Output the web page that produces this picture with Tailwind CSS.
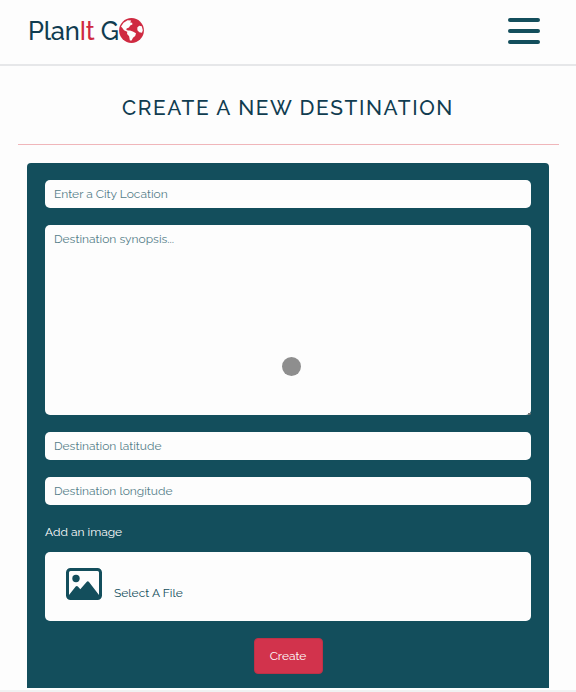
<!DOCTYPE html>
<html lang="en">
<head>
<meta charset="utf-8">
<title>PlanIt Go</title>
<script src="https://cdn.jsdelivr.net/npm/@tailwindcss/browser@4"></script>
</head>
<body class="bg-[#fdfdfd] h-[692px] overflow-hidden font-[Raleway,Lato,sans-serif] text-[#134e5c]">
<header class="h-[66px] border-b-2 border-[#e6e7e9] flex justify-between pl-[28px] pr-[36px]">
  <a class="flex h-[62px] items-center text-[25.5px] font-medium tracking-[-0.2px] text-[#103c50] whitespace-pre"><span>Plan</span><span class="text-[#cf2a41]">It</span><span> G</span><svg class="size-[25px] mb-px" viewBox="0 0 25 25"><circle cx="12.5" cy="12.5" r="12.4" fill="#cf2a41"/><path fill="#fdfdfd" d="M2 8.6 4.6 4.8 8.6 2.2 12.2 2.6 11.2 4.4 13.2 4.8 13.4 6.4 11.2 7.6 10 9.6 7.6 10.6 7.4 12 9.2 12.4 11 12.6 13.8 13.4 17 15.2 16.2 18 14 19.8 12.6 22.6 10.9 22.4 10.1 18.3 8.1 16.1 8.2 13.8 5 12.2 3.2 9.8ZM18.3 9.4 20.2 7.8 22.8 8.2 23.8 12.2 23 14.8 20.3 14.2 18.4 12.2Z"/></svg></a>
  <button class="flex flex-col gap-[7px] pt-[18px]" aria-label="Menu"><span class="block w-8 h-[4px] rounded-full bg-[#134e5c]"></span><span class="block w-8 h-[4px] rounded-full bg-[#134e5c]"></span><span class="block w-8 h-[4px] rounded-full bg-[#134e5c]"></span></button>
</header>
<main class="relative px-[18px]">
  <h1 class="h-[78px] pt-[26px] text-center text-[20.8px] font-medium leading-[32px] tracking-[1.6px] text-[#103c50]">CREATE A NEW DESTINATION</h1>
  <hr class="border-0 h-px bg-[#f0b6ba] mr-[-1px]">
  <form class="mt-[18px] mx-[9px] h-[525px] bg-[#134e5c] rounded-t-[4px] px-[18px] pt-[17px] flex flex-col text-[12px]">
    <input class="h-7 shrink-0 rounded-[5px] bg-[#fdfdfd] px-[9px] placeholder:text-[#557d89] placeholder:opacity-100" placeholder="Enter a City Location">
    <textarea class="mt-[17px] h-[190px] shrink-0 rounded-[5px] bg-[#fdfdfd] px-[9px] pt-[5px] leading-[18px] resize-none placeholder:text-[#557d89]" placeholder="Destination synopsis..."></textarea>
    <input class="mt-[17px] h-7 shrink-0 rounded-[5px] bg-[#fdfdfd] px-[9px] placeholder:text-[#557d89]" placeholder="Destination latitude">
    <input class="mt-[17px] h-7 shrink-0 rounded-[5px] bg-[#fdfdfd] px-[9px] placeholder:text-[#557d89]" placeholder="Destination longitude">
    <span class="mt-[17px] h-[30px] leading-[20px] text-[#fdfdfd]">Add an image</span>
    <label class="h-[69px] shrink-0 rounded-[5px] bg-[#fdfdfd] flex pl-[21px] gap-[12px]">
      <svg class="w-9 h-8 mt-[16px]" viewBox="0 0 36 32" fill="#134e5c"><rect x="1.5" y="1.5" width="33" height="29" rx="3" fill="none" stroke="#134e5c" stroke-width="3"/><circle cx="10" cy="10.5" r="3.7"/><path d="M3 27 9.7 18.6Q10.8 17.5 11.9 18.6L14.3 21.3 20.6 13.9Q21.8 12.7 23 13.9L33 27V29H3Z"/></svg>
      <span class="mt-[32px] leading-[18px]">Select A File</span>
    </label>
    <button class="mt-[17px] mx-auto h-[36px] w-[69px] shrink-0 rounded-[4px] bg-[#d2334c] border border-[#bd3146] text-[#fdfdfd]">Create</button>
  </form>
  <div class="absolute left-[282px] top-[291px] size-[19px] rounded-full bg-[#8e8e8e]"></div>
  <div class="absolute left-[531px] top-[347px] -ml-[3px] w-[3px] h-[2px] bg-[#747474] rounded-br-[2px]"></div>
</main>
<footer class="mt-[2px] h-[2px] bg-[#f0f1f2]"></footer>
</body>
</html>
